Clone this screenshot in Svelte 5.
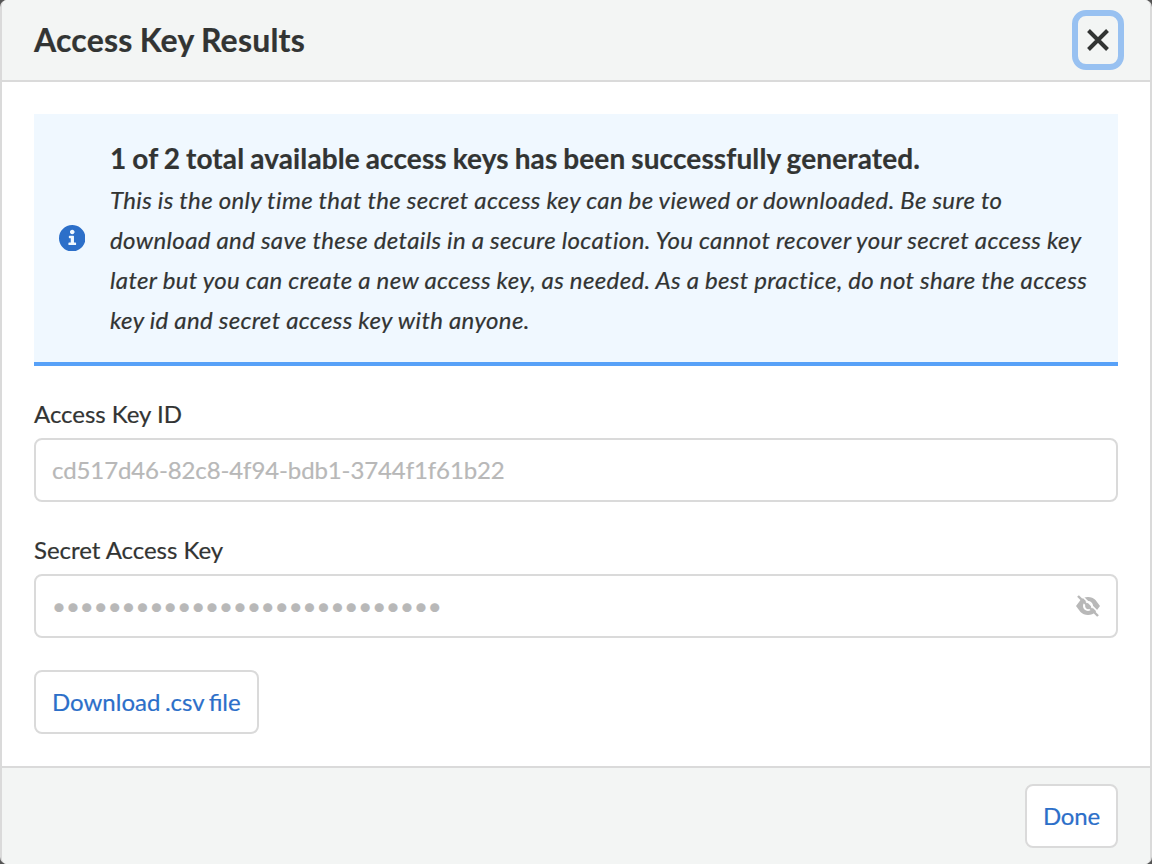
<script>
  const accessKeyId = 'cd517d46-82c8-4f94-bdb1-3744f1f61b22';
  const maskedSecret = '•'.repeat(28);
</script>

<div class="backdrop">
  <section class="modal" role="dialog" aria-labelledby="title">
    <header>
      <h1 id="title">Access Key Results</h1>
      <button class="close" aria-label="Close">
        <svg width="24" height="24" viewBox="0 0 24 24"><path d="M2.500 2.500L21.500 21.500M21.500 2.500L2.500 21.500" stroke="#323433" stroke-width="4" /></svg>
      </button>
    </header>

    <main>
      <div class="banner">
        <svg class="info" viewBox="8 8 496 496" fill="#2c6fc9"><path d="M256 8C119.043 8 8 119.083 8 256c0 136.997 111.043 248 248 248s248-111.003 248-248C504 119.083 392.957 8 256 8zm0 90c25 0 44 19 44 42s-19 42-44 42-44-19-44-42 19-42 44-42zm72 274c0 6.627-5.373 12-12 12h-120c-6.627 0-12-5.373-12-12v-24c0-6.627 5.373-12 12-12h32v-80h-24c-6.627 0-12-5.373-12-12v-24c0-6.627 5.373-12 12-12h72c6.627 0 12 5.373 12 12v116h28c6.627 0 12 5.373 12 12v24z" /></svg>
        <div class="message">
          <h2>1 of 2 total available access keys has been successfully generated.</h2>
          <p>This is the only time that the secret access key can be viewed or downloaded. Be sure to download and save these details in a secure location. You cannot recover your secret access key later but you can create a new access key, as needed. As a best practice, do not share the access key id and secret access key with anyone.</p>
        </div>
      </div>

      <div class="label">Access Key ID</div>
      <div class="field"><span class="key">{accessKeyId}</span></div>

      <div class="label">Secret Access Key</div>
      <div class="field">
        <span class="dots">{maskedSecret}</span>
        <svg class="eye" width="24" height="22" viewBox="0 0 24 22">
          <path fill="#b8b8b8" fill-rule="evenodd" d="M0 11L4.500 5Q7.500 2 12 2T19.500 5L24 11L19.500 17Q16.500 20 12 20T4.500 17ZM12 6A5 5 0 1 0 12 16A5 5 0 1 0 12 6ZM12 7.800A3.200 3.200 0 1 1 12 14.200A3.200 3.200 0 0 1 9.500 9.500Z" />
          <path d="M4 -1L24 19" stroke="#fff" stroke-width="1.600" />
          <path d="M2 1L22 21" stroke="#b8b8b8" stroke-width="2.400" />
        </svg>
      </div>

      <button class="action download">Download .csv file</button>
    </main>

    <footer><button class="action done">Done</button></footer>
  </section>
</div>

<style>
  .backdrop {
    height: 864px;
    background: #555;
  }
  .modal {
    box-sizing: border-box;
    height: 864px;
    display: flex;
    flex-direction: column;
    border: 2px solid #dadada;
    border-width: 0 2px;
    border-radius: 7px;
    overflow: hidden;
    background: #fff;
    color: #323433;
    font: 24px/40px Lato, sans-serif;
    -webkit-text-stroke: 0.2px;
  }
  header {
    box-sizing: border-box;
    height: 82px;
    flex: none;
    display: flex;
    align-items: center;
    justify-content: space-between;
    padding: 0 26px 0 32px;
    border-bottom: 2px solid #dadada;
    background: #f3f5f4;
  }
  h1, h2, p { margin: 0; }
  h1 { font-size: 32px; line-height: 40px; font-weight: 700; letter-spacing: 0.2px; word-spacing: -0.8px; }
  .close {
    box-sizing: border-box;
    width: 52px;
    height: 60px;
    padding: 0;
    display: grid;
    place-items: center;
    border: 6px solid #98c1f1;
    border-radius: 14px;
    background: #f3f5f4;
  }
  main {
    flex: 1;
    padding: 32px 32px 0;
  }
  .banner {
    box-sizing: border-box;
    height: 252px;
    display: flex;
    align-items: center;
    padding: 0 24px;
    border-bottom: 4px solid #57a1f8;
    background: #f0f8ff;
  }
  .info { width: 26.5px; height: 26.5px; flex: none; margin-left: 0.5px; }
  .message { margin-left: 25px; flex: 1; margin-right: -4px; }
  h2 { font-size: 28px; line-height: 42px; padding-bottom: 1px; font-weight: 700; letter-spacing: 0.12px; word-spacing: -1px; }
  p { font-style: italic; letter-spacing: 0.37px; word-spacing: -0.35px; font-variant-ligatures: none; }
  .label { margin-top: 28px; height: 44px; letter-spacing: -0.03px; }
  .field {
    box-sizing: border-box;
    height: 64px;
    display: flex;
    align-items: center;
    justify-content: space-between;
    padding: 0 16px;
    border: 2px solid #dadada;
    border-radius: 8px;
    color: #b8b8b8;
  }
  .key { letter-spacing: -0.11px; }
  .action {
    box-sizing: border-box;
    height: 64px;
    padding: 0 16px;
    border: 2px solid #dadada;
    border-radius: 8px;
    background: #fff;
    color: #2c6fc9;
    font: 24px/40px Lato, sans-serif;
  }
  .download { margin-top: 32px; word-spacing: -1.6px; }
  .done { letter-spacing: -0.17px; }
  footer {
    box-sizing: border-box;
    height: 98px;
    display: flex;
    justify-content: flex-end;
    padding: 16px 32px;
    border-top: 2px solid #dadada;
    background: #f3f5f4;
  }
</style>
